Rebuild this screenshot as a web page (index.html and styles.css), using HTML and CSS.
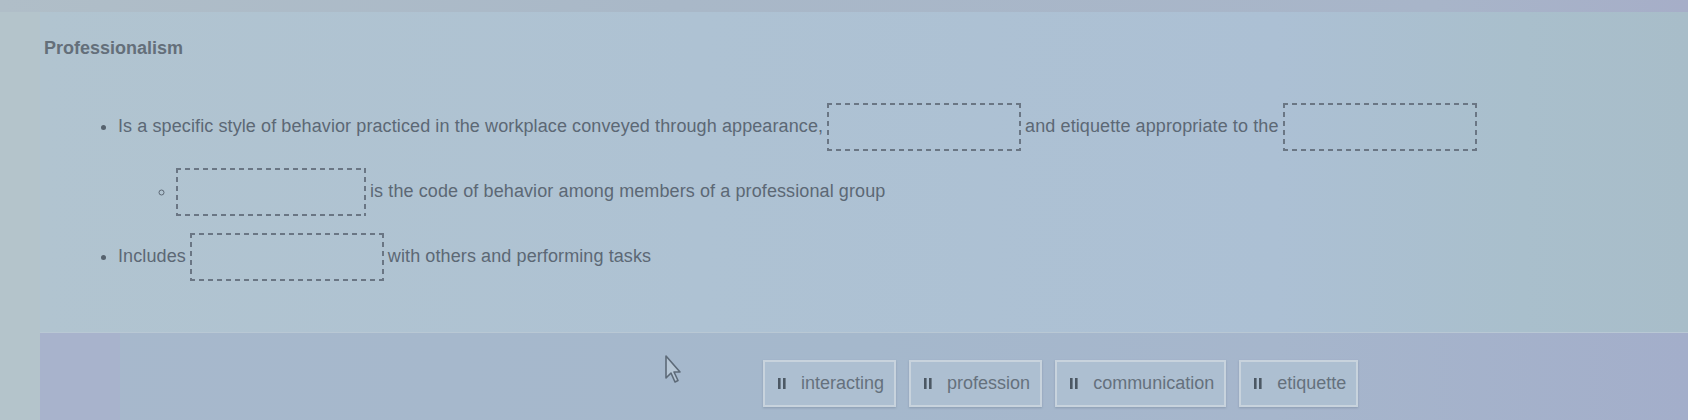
FILE: index.html
```html
<!DOCTYPE html>
<html>
<head>
<meta charset="utf-8">
<link rel="stylesheet" href="styles.css">
</head>
<body>
<div class="topbar"></div>
<div class="main">
  <div class="margin"></div>
  <div class="panel">
    <div class="heading">Professionalism</div>
    <ul class="list">
      <li class="row">Is a specific style of behavior practiced in the workplace conveyed through appearance,<span class="drop"></span>and etiquette appropriate to the<span class="drop"></span>
        <ul class="sub">
          <li class="row"><span class="drop first"></span>is the code of behavior among members of a professional group</li>
        </ul>
      </li>
      <li class="row">Includes<span class="drop"></span>with others and performing tasks</li>
    </ul>
  </div>
</div>
<div class="bank">
  <div class="margin"></div>
  <div class="bankarea">
    <div class="bankleft"></div>
    <div class="chips">
      <div class="chip"><svg class="grip" viewBox="0 0 8 11" width="8" height="11"><rect x="0" y="0" width="2.6" height="11" fill="#4c5864"/><rect x="5" y="0" width="2.6" height="11" fill="#4c5864"/></svg><span>interacting</span></div>
      <div class="chip"><svg class="grip" viewBox="0 0 8 11" width="8" height="11"><rect x="0" y="0" width="2.6" height="11" fill="#4c5864"/><rect x="5" y="0" width="2.6" height="11" fill="#4c5864"/></svg><span>profession</span></div>
      <div class="chip"><svg class="grip" viewBox="0 0 8 11" width="8" height="11"><rect x="0" y="0" width="2.6" height="11" fill="#4c5864"/><rect x="5" y="0" width="2.6" height="11" fill="#4c5864"/></svg><span>communication</span></div>
      <div class="chip"><svg class="grip" viewBox="0 0 8 11" width="8" height="11"><rect x="0" y="0" width="2.6" height="11" fill="#4c5864"/><rect x="5" y="0" width="2.6" height="11" fill="#4c5864"/></svg><span>etiquette</span></div>
    </div>
  </div>
  <svg class="cursor" viewBox="0 0 18 30" width="18" height="30"><path d="M2 2 L2 24 L7 19 L11 28 L14 26.5 L10 18 L16 18 Z" fill="#b7c7d6" stroke="#5d6a78" stroke-width="1.6" stroke-linejoin="round"/></svg>
</div>
</body>
</html>
```
FILE: styles.css
```css
html, body {
  margin: 0;
  padding: 0;
}
body {
  width: 1688px;
  height: 420px;
  overflow: hidden;
  background: #b3c3cb;
  font-family: "Liberation Sans", Arial, sans-serif;
  color: #5c6875;
  position: relative;
}
.topbar {
  height: 12px;
  background: linear-gradient(90deg, #b0bec8 0%, #a9b8c8 40%, #a8b5c9 85%, #a6aec8 100%);
}
.main {
  display: flex;
  height: 320px;
}
.margin {
  width: 40px;
  flex: none;
  background: #b4c4cb;
}
.panel {
  flex: 1;
  background: linear-gradient(90deg, #b1c4d0 0%, #aec2d3 40%, #acc0d4 75%, #a9bfcc 90%, #a8bdc9 100%);
  padding: 26px 0 0 4px;
  box-sizing: border-box;
}
.heading {
  font-weight: bold;
  font-size: 18px;
  line-height: 20px;
  color: #646f7a;
}
.list {
  margin: 45px 0 0 0;
  padding: 0 0 0 74px;
  list-style: disc;
  font-size: 18px;
  letter-spacing: 0.1px;
}
.row {
  line-height: 20px;
  margin-bottom: 17px;
}
.list > .row::marker {
  color: #56626e;
}
.sub {
  list-style: circle;
  margin: 17px 0 0 0;
  padding: 0 0 0 58px;
}
.drop {
  display: inline-block;
  width: 194px;
  height: 48px;
  vertical-align: middle;
  margin: 0 4px;
  background:
    repeating-linear-gradient(90deg, #6a7684 0 5px, transparent 5px 9px) top left / 100% 2px no-repeat,
    repeating-linear-gradient(90deg, #6a7684 0 5px, transparent 5px 9px) bottom left / 100% 2px no-repeat,
    repeating-linear-gradient(180deg, #6a7684 0 5px, transparent 5px 9px) top left / 2px 100% no-repeat,
    repeating-linear-gradient(180deg, #6a7684 0 5px, transparent 5px 9px) top right / 2px 100% no-repeat;
}
.drop.first {
  margin-left: 0;
  width: 190px;
}
.bank {
  display: flex;
  height: 88px;
}
.bankarea {
  flex: 1;
  display: flex;
  background: linear-gradient(90deg, #a7b8cc 0%, #a5b8cc 50%, #a6b6cc 75%, #a3aeca 100%);
  border-top: 1px solid #b9c8d4;
}
.bankleft {
  width: 80px;
  background: #a8b3cc;
}
.chips {
  display: flex;
  gap: 13px;
  padding: 27px 0 0 643px;
  align-items: flex-start;
}
.chip {
  display: flex;
  align-items: center;
  gap: 15px;
  height: 47px;
  box-sizing: border-box;
  padding: 0 10px 0 13px;
  border: 2px solid #c8d3dd;
  background: #adbfd1;
  box-shadow: 0 1px 2px rgba(90, 105, 125, 0.35);
  font-size: 18px;
  color: #65717d;
}
.grip {
  flex: none;
}
.cursor {
  position: absolute;
  left: 664px;
  top: 354px;
}
```
